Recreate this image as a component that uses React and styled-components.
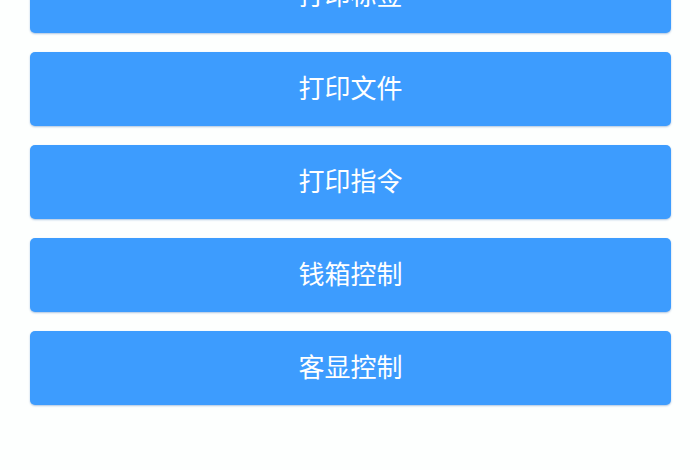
import styled, { createGlobalStyle } from 'styled-components';

const Global = createGlobalStyle`
  html, body {
    margin: 0;
    padding: 0;
    background: #ffffff;
    overflow: hidden;
  }
  body {
    font-family: "Noto Sans CJK SC", "Noto Sans", sans-serif;
  }
`

const Page = styled.div`
  width: 700px;
  height: 470px;
  overflow: hidden;
  background: #fdfffe;
`

const ButtonList = styled.div`
  display: flex;
  flex-direction: column;
  gap: 19px;
  padding: 0 29px 0 30px;
  margin-top: -41px;
`

const ActionButton = styled.button`
  display: flex;
  align-items: center;
  justify-content: center;
  height: 74px;
  width: 100%;
  border: none;
  border-radius: 5px;
  background: #3d9cfe;
  box-shadow: 0 1px 2px rgba(30, 90, 170, 0.35);
  color: #ffffff;
  font-family: "Noto Sans CJK SC", "Noto Sans", sans-serif;
  font-size: 26px;
  letter-spacing: 0;
  padding: 0 0 5px;
  cursor: pointer;
`

const actions = ['打印标签', '打印文件', '打印指令', '钱箱控制', '客显控制'];

export default function App() {
  return (
    <Page>
      <Global />
      <ButtonList>
        {actions.map((label) => (
          <ActionButton key={label}>{label}</ActionButton>
        ))}
      </ButtonList>
    </Page>
  )
}
